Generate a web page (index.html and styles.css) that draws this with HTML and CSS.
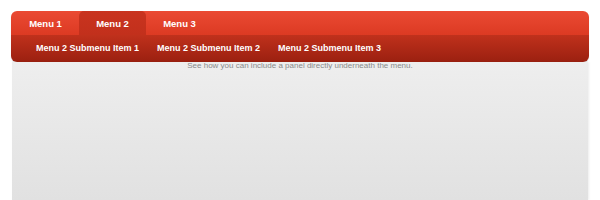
FILE: index.html
```html
<!DOCTYPE html>
<html>
<head>
    <meta charset="UTF-8">
    <title>Menu</title>
    <link rel="stylesheet" href="styles.css">
</head>
<body>
<div class="menu_wrap">
    <ul class="menu_top">
        <li><a href="#">Menu 1</a></li>
        <li class="active"><a href="#">Menu 2</a></li>
        <li><a href="#">Menu 3</a></li>
    </ul>
    <ul class="menu_sub">
        <li><a href="#">Menu 2 Submenu Item 1</a></li>
        <li><a href="#">Menu 2 Submenu Item 2</a></li>
        <li><a href="#">Menu 2 Submenu Item 3</a></li>
    </ul>
</div>
<div class="panel">
    <p>See how you can include a panel directly underneath the menu.</p>
</div>
</body>
</html>
```
FILE: styles.css
```css
* {
    margin: 0px;
    padding: 0px;
    box-sizing: border-box;
}

body {
    background-color: white;
    font-family: "Liberation Sans", Arial, sans-serif;
    padding: 11px 11px 0 11px;
    height: 200px;
    overflow: hidden;
}

ul {
    list-style: none;
}

a {
    color: white;
    text-decoration: none;
    font-weight: bold;
    font-size: 9px;
}

.menu_wrap {
    border-radius: 6px;
    overflow: hidden;
    box-shadow: 0 1px 1px rgba(0, 0, 0, 0.15);
}

.menu_top {
    display: flex;
    height: 24px;
    background: linear-gradient(#ea4a33, #dc3a23);
    padding-left: 1px;
}

.menu_top li {
    width: 67px;
    display: flex;
    align-items: center;
    justify-content: center;
}

.menu_top a {
    font-size: 9.5px;
}

.menu_top li.active {
    background: linear-gradient(#c9341f, #c2301c);
    border-radius: 5px 5px 0 0;
}

.menu_sub {
    display: flex;
    height: 27px;
    background: linear-gradient(#c0311c, #9b2010);
    padding-left: 15px;
}

.menu_sub li {
    display: flex;
    align-items: center;
    padding: 0 8px 1px 10px;
}

.panel {
    margin: 0 1px;
    height: 138px;
    background: linear-gradient(#eeeeee, #e1e1e1);
    box-shadow: 1px 0 2px rgba(0, 0, 0, 0.08);
}

.panel p {
    text-align: center;
    font-size: 8px;
    color: #8a8a8a;
    line-height: 8px;
}
```
